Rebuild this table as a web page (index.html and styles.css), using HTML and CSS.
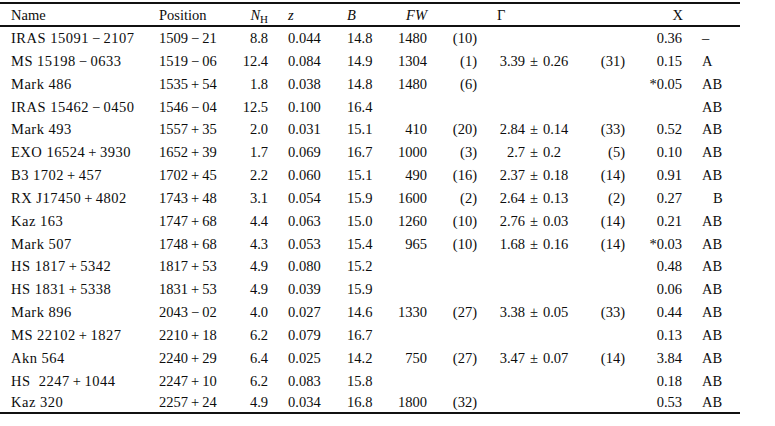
FILE: index.html
```html
<!DOCTYPE html>
<html>
<head>
<meta charset="utf-8">
<link rel="stylesheet" href="styles.css">
</head>
<body>
<table class="tbl">
<colgroup>
<col class="c-name"><col class="c-pos"><col class="c-nh"><col class="c-z"><col class="c-b"><col class="c-fw"><col class="c-ref"><col class="c-gam"><col class="c-ref2"><col class="c-x"><col class="c-cls">
</colgroup>
<thead>
<tr>
<th class="name">Name</th>
<th class="pos">Position</th>
<th class="nh"><i>N</i><sub>H</sub></th>
<th class="z"><i>z</i></th>
<th class="b"><i>B</i></th>
<th class="fw"><i>FW</i></th>
<th class="ref"></th>
<th class="gam gh">Γ</th>
<th class="ref2"></th>
<th class="x">X</th>
<th class="cls"></th>
</tr>
</thead>
<tbody>
<tr><td class="name">IRAS 15091<span class="op">−</span>2107</td><td class="pos">1509<span class="op">−</span>21</td><td class="nh">8.8</td><td class="z">0.044</td><td class="b">14.8</td><td class="fw">1480</td><td class="ref">(10)</td><td class="gam"></td><td class="ref2"></td><td class="x">0.36</td><td class="cls">–</td></tr>
<tr><td class="name">MS 15198<span class="op">−</span>0633</td><td class="pos">1519<span class="op">−</span>06</td><td class="nh">12.4</td><td class="z">0.084</td><td class="b">14.9</td><td class="fw">1304</td><td class="ref">(1)</td><td class="gam">3.39<span class="pm">±</span>0.26</td><td class="ref2">(31)</td><td class="x">0.15</td><td class="cls">A</td></tr>
<tr><td class="name">Mark 486</td><td class="pos">1535<span class="op">+</span>54</td><td class="nh">1.8</td><td class="z">0.038</td><td class="b">14.8</td><td class="fw">1480</td><td class="ref">(6)</td><td class="gam"></td><td class="ref2"></td><td class="x">*0.05</td><td class="cls">AB</td></tr>
<tr><td class="name">IRAS 15462<span class="op">−</span>0450</td><td class="pos">1546<span class="op">−</span>04</td><td class="nh">12.5</td><td class="z">0.100</td><td class="b">16.4</td><td class="fw"></td><td class="ref"></td><td class="gam"></td><td class="ref2"></td><td class="x"></td><td class="cls">AB</td></tr>
<tr><td class="name">Mark 493</td><td class="pos">1557<span class="op">+</span>35</td><td class="nh">2.0</td><td class="z">0.031</td><td class="b">15.1</td><td class="fw">410</td><td class="ref">(20)</td><td class="gam">2.84<span class="pm">±</span>0.14</td><td class="ref2">(33)</td><td class="x">0.52</td><td class="cls">AB</td></tr>
<tr><td class="name">EXO 16524<span class="op">+</span>3930</td><td class="pos">1652<span class="op">+</span>39</td><td class="nh">1.7</td><td class="z">0.069</td><td class="b">16.7</td><td class="fw">1000</td><td class="ref">(3)</td><td class="gam">2.7<span class="pm">±</span>0.2</td><td class="ref2">(5)</td><td class="x">0.10</td><td class="cls">AB</td></tr>
<tr><td class="name">B3 1702<span class="op">+</span>457</td><td class="pos">1702<span class="op">+</span>45</td><td class="nh">2.2</td><td class="z">0.060</td><td class="b">15.1</td><td class="fw">490</td><td class="ref">(16)</td><td class="gam">2.37<span class="pm">±</span>0.18</td><td class="ref2">(14)</td><td class="x">0.91</td><td class="cls">AB</td></tr>
<tr><td class="name">RX J17450<span class="op">+</span>4802</td><td class="pos">1743<span class="op">+</span>48</td><td class="nh">3.1</td><td class="z">0.054</td><td class="b">15.9</td><td class="fw">1600</td><td class="ref">(2)</td><td class="gam">2.64<span class="pm">±</span>0.13</td><td class="ref2">(2)</td><td class="x">0.27</td><td class="cls"><span class="bonly">B</span></td></tr>
<tr><td class="name">Kaz 163</td><td class="pos">1747<span class="op">+</span>68</td><td class="nh">4.4</td><td class="z">0.063</td><td class="b">15.0</td><td class="fw">1260</td><td class="ref">(10)</td><td class="gam">2.76<span class="pm">±</span>0.03</td><td class="ref2">(14)</td><td class="x">0.21</td><td class="cls">AB</td></tr>
<tr><td class="name">Mark 507</td><td class="pos">1748<span class="op">+</span>68</td><td class="nh">4.3</td><td class="z">0.053</td><td class="b">15.4</td><td class="fw">965</td><td class="ref">(10)</td><td class="gam">1.68<span class="pm">±</span>0.16</td><td class="ref2">(14)</td><td class="x">*0.03</td><td class="cls">AB</td></tr>
<tr><td class="name">HS 1817<span class="op">+</span>5342</td><td class="pos">1817<span class="op">+</span>53</td><td class="nh">4.9</td><td class="z">0.080</td><td class="b">15.2</td><td class="fw"></td><td class="ref"></td><td class="gam"></td><td class="ref2"></td><td class="x">0.48</td><td class="cls">AB</td></tr>
<tr><td class="name">HS 1831<span class="op">+</span>5338</td><td class="pos">1831<span class="op">+</span>53</td><td class="nh">4.9</td><td class="z">0.039</td><td class="b">15.9</td><td class="fw"></td><td class="ref"></td><td class="gam"></td><td class="ref2"></td><td class="x">0.06</td><td class="cls">AB</td></tr>
<tr><td class="name">Mark 896</td><td class="pos">2043<span class="op">−</span>02</td><td class="nh">4.0</td><td class="z">0.027</td><td class="b">14.6</td><td class="fw">1330</td><td class="ref">(27)</td><td class="gam">3.38<span class="pm">±</span>0.05</td><td class="ref2">(33)</td><td class="x">0.44</td><td class="cls">AB</td></tr>
<tr><td class="name">MS 22102<span class="op">+</span>1827</td><td class="pos">2210<span class="op">+</span>18</td><td class="nh">6.2</td><td class="z">0.079</td><td class="b">16.7</td><td class="fw"></td><td class="ref"></td><td class="gam"></td><td class="ref2"></td><td class="x">0.13</td><td class="cls">AB</td></tr>
<tr><td class="name">Akn 564</td><td class="pos">2240<span class="op">+</span>29</td><td class="nh">6.4</td><td class="z">0.025</td><td class="b">14.2</td><td class="fw">750</td><td class="ref">(27)</td><td class="gam">3.47<span class="pm">±</span>0.07</td><td class="ref2">(14)</td><td class="x">3.84</td><td class="cls">AB</td></tr>
<tr><td class="name">HS&nbsp; 2247<span class="op">+</span>1044</td><td class="pos">2247<span class="op">+</span>10</td><td class="nh">6.2</td><td class="z">0.083</td><td class="b">15.8</td><td class="fw"></td><td class="ref"></td><td class="gam"></td><td class="ref2"></td><td class="x">0.18</td><td class="cls">AB</td></tr>
<tr class="last"><td class="name">Kaz 320</td><td class="pos">2257<span class="op">+</span>24</td><td class="nh">4.9</td><td class="z">0.034</td><td class="b">16.8</td><td class="fw">1800</td><td class="ref">(32)</td><td class="gam"></td><td class="ref2"></td><td class="x">0.53</td><td class="cls">AB</td></tr>
</tbody>
</table>
</body>
</html>
```

FILE: styles.css
```css
html, body {
  margin: 0;
  padding: 0;
  background: #ffffff;
}

body {
  font-family: "Liberation Serif", "Times New Roman", serif;
  font-size: 14.5px;
  color: #0d0d0d;
}

.tbl {
  margin-top: 2px;
  width: 740px;
  border-collapse: collapse;
  table-layout: fixed;
  border-top: 2px solid #111;
  border-bottom: 2px solid #111;
}

.c-name { width: 155px; }
.c-pos { width: 80px; }
.c-nh { width: 37px; }
.c-z { width: 68px; }
.c-b { width: 45px; }
.c-fw { width: 46px; }
.c-ref { width: 50px; }
.c-gam { width: 106px; }
.c-ref2 { width: 42px; }
.c-x { width: 57px; }
.c-cls { width: 54px; }

.tbl th,
.tbl td {
  padding: 0;
  white-space: nowrap;
  font-weight: normal;
}

.tbl thead th {
  line-height: 20px;
  padding-top: 1px;
  border-bottom: 2px solid #111;
}

.tbl tbody td {
  line-height: 22.84px;
}

.tbl tr.last td {
  line-height: 19px;
}

.name { text-align: left; padding-left: 11px !important; }
td.name { letter-spacing: 0.5px; }
.pos { text-align: left; padding-left: 4px !important; }
.nh { text-align: right; padding-right: 4px !important; }
.z { text-align: left; padding-left: 16px !important; }
.b { text-align: left; padding-left: 7px !important; }
.fw { text-align: right; padding-right: 4px !important; }
.ref { text-align: right; padding-right: 4px !important; }
.gam { text-align: center; }
.gh { text-align: left; padding-left: 16px !important; }
.ref2 { text-align: right; padding-right: 4px !important; }
.x { text-align: right; padding-right: 4px !important; }
.cls { text-align: left; padding-left: 16px !important; }

th.x { padding-right: 3px !important; }

.nh sub {
  font-size: 11px;
  vertical-align: -3px;
  line-height: 0;
}

.op {
  margin: 0 3px;
}

.pm {
  margin: 0 5px;
}

.bonly {
  padding-left: 11px;
}
```
